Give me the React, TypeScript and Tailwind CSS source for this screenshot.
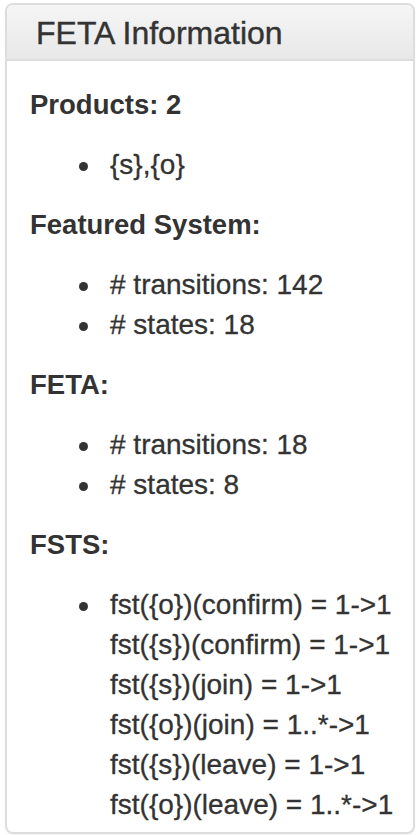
import React from "react";

const font = { fontFamily: '"Liberation Sans", Arial, Helvetica, sans-serif' };

function Heading({ children }: { children: React.ReactNode }) {
  return (
    <div className="text-[27.5px] font-bold leading-[40px] text-[#333333]">
      {children}
    </div>
  );
}

function Item({ lines }: { lines: string[] }) {
  return (
    <li className="flex">
      <span className="w-[80px] shrink-0 pl-[49px]">
        <span className="mt-[17px] block h-[9px] w-[9px] rounded-full bg-[#333333]" />
      </span>
      <span className="flex flex-col">
        {lines.map((l) => (
          <span key={l} className="block h-[40px] whitespace-nowrap">
            {l}
          </span>
        ))}
      </span>
    </li>
  );
}

function List({ items }: { items: string[][] }) {
  return (
    <ul className="flex flex-col text-[28px] leading-[40px] text-[#333333] [-webkit-text-stroke:0.3px_#333333]">
      {items.map((it, i) => (
        <Item key={i} lines={it} />
      ))}
    </ul>
  );
}

export default function App() {
  return (
    <div className="min-h-[835px] bg-white px-[5px] pt-[3px]" style={font}>
      <div className="overflow-hidden rounded-[8px] border-2 border-[#dddddd] bg-white shadow-[0_1px_2px_rgba(0,0,0,0.05)]">
        <div className="border-b-2 border-[#dddddd] bg-gradient-to-b from-[#f5f5f5] to-[#e8e8e8] pb-[8px] pl-[29px] pt-[11px]">
          <h3 className="text-[32px] leading-[35px] text-[#333333] [-webkit-text-stroke:0.4px_#333333]">
            FETA Information
          </h3>
        </div>
        <div className="flex flex-col gap-[20px] pb-[7px] pl-[23px] pt-[24px]">
          <Heading>Products: 2</Heading>
          <List items={[["{s},{o}"]]} />
          <Heading>Featured System:</Heading>
          <List items={[["# transitions: 142"], ["# states: 18"]]} />
          <Heading>FETA:</Heading>
          <List items={[["# transitions: 18"], ["# states: 8"]]} />
          <Heading>FSTS:</Heading>
          <List
            items={[
              [
                "fst({o})(confirm) = 1->1",
                "fst({s})(confirm) = 1->1",
                "fst({s})(join) = 1->1",
                "fst({o})(join) = 1..*->1",
                "fst({s})(leave) = 1->1",
                "fst({o})(leave) = 1..*->1",
              ],
            ]}
          />
        </div>
      </div>
    </div>
  );
}
